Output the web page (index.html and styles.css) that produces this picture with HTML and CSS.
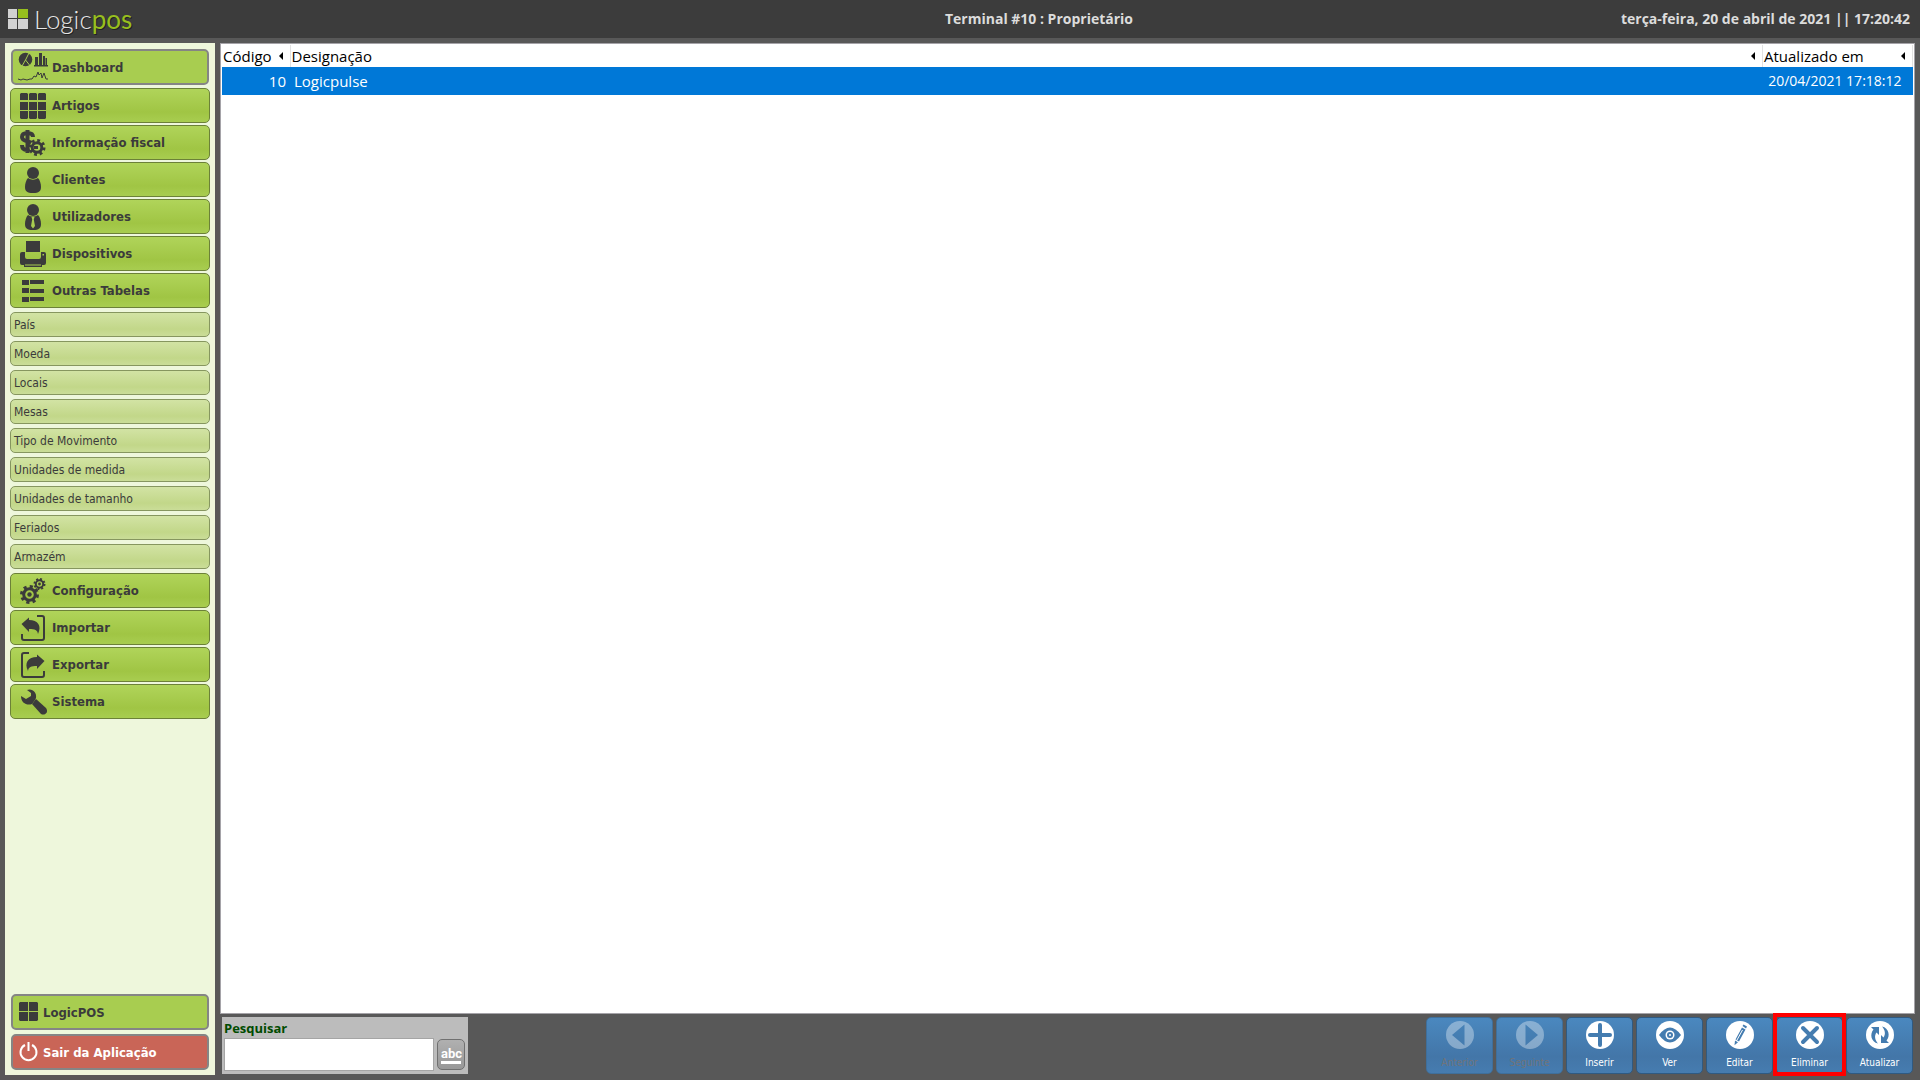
FILE: index.html
```html
<!DOCTYPE html>
<html lang="pt">
<head>
  <meta charset="UTF-8">
  <title>LogicPOS - BackOffice</title>
  <link rel="stylesheet" href="styles.css">
</head>
<body>
  <header class="topbar">
    <div class="logo">
      <svg class="logo-mark" viewBox="0 0 20 20">
        <path fill="#d2d2d2" d="M0 0h9v9H0zM0 10h9v10H0zM10 10h10v10H10z"/>
        <path fill="#97bf1e" d="M10 0h10v9H10z"/>
      </svg>
      <span class="logo-text">Logic<b>pos</b></span>
    </div>
    <h1 class="terminal">Terminal #10 : Proprietário</h1>
    <div class="clock">terça-feira, 20 de abril de 2021 || 17:20:42</div>
  </header>

  <div class="workspace">
    <nav class="sidebar">
      <button class="menu-btn framed dashboard">
        <svg class="icon-large" viewBox="0 0 30 30">
          <circle cx="7.5" cy="7.500" r="6.800"/>
          <path class="cut" d="M7.500 8L11 1M7.500 8L4 14M7.500 8l4 5"/>
          <path d="M16 13h14v1.500H16zM17 5h3v8h-3zM21 1h3v12h-3zM25 4h2v9h-2zM27.500 6H29v7h-1.500z"/>
          <path class="line" d="M0 27l3 1 2-1 4 1 3-1h2l2-3 2 1 2-5 1 3 2-2 1 5 2-5 2 6h2"/>
        </svg>
        <span>Dashboard</span>
      </button>
      <button class="menu-btn">
        <svg class="icon" viewBox="0 0 26 26">
          <path d="M1 0h6l1 1v6H0V1zM10 0h6l1 1v6H9V1zM19 0h6l1 1v6h-8V1zM0 9h8v8H0zM9 9h8v8H9zM18 9h8v8h-8zM0 18h8v7l-1 1H1l-1-1zM9 18h8v7l-1 1h-6l-1-1zM18 18h8v7l-1 1h-6l-1-1z"/>
          <path class="cut" d="M8.500 0v26M17.500 0v26M0 8.500h26M0 17.500h26"/>
        </svg>
        <span>Artigos</span>
      </button>
      <button class="menu-btn">
        <svg class="icon" viewBox="0 0 26 26">
          <path class="dollar" d="M13 7c0-3-2-4-5.500-4S2 4.500 2 7c0 6 11 3 11 8.500 0 3-2.500 4.500-6 4.500S2 18 2 15M7.500 0v23"/>
          <circle class="halo" cx="17" cy="17.500" r="5.500"/>
          <circle class="ring" cx="17" cy="17.500" r="4.800"/>
          <circle class="teeth" cx="17" cy="17.500" r="7" stroke-dasharray="2.750"/>
          <path d="M14 16h4v3h-4z"/>
        </svg>
        <span>Informação fiscal</span>
      </button>
      <button class="menu-btn">
        <svg class="icon" viewBox="0 0 26 26">
          <circle cx="13" cy="6" r="6"/>
          <path d="M8 11q5 3.500 10 0c2 2 3 6 3 9 0 4-2 6-8 6s-8-2-8-6c0-3 1-7 3-9z"/>
        </svg>
        <span>Clientes</span>
      </button>
      <button class="menu-btn">
        <svg class="icon" viewBox="0 0 26 26">
          <circle cx="13" cy="6" r="6"/>
          <path d="M8 11q5 3.500 10 0c2 2 3 6 3 9 0 4-2 6-8 6s-8-2-8-6c0-3 1-7 3-9z"/>
          <path class="tie" d="M11.500 13h3l-.7 2.500L15 22l-2 2.500L11 22l1.200-6.500z"/>
        </svg>
        <span>Utilizadores</span>
      </button>
      <button class="menu-btn">
        <svg class="icon" viewBox="0 0 26 26">
          <path d="M6 0h14v11H6zM2 11h3v5q0 2 2 2h12q2 0 2-2v-5h3q2 0 2 2v9q0 2-2 2H2q-2 0-2-2v-9q0-2 2-2z"/>
          <path d="M4 23h18v3H4z"/>
          <path class="tie" d="M5 23.500h16v1H5zM22.500 13h1.500v1.500h-1.500z"/>
        </svg>
        <span>Dispositivos</span>
      </button>
      <button class="menu-btn">
        <svg class="icon" viewBox="0 0 26 26">
          <path d="M2 2h7v5H2zM10 2h14v4H10zM2 10h7v5H2zM10 11h14v4H10zM2 19h7v5H2zM10 19h14v4H10z"/>
        </svg>
        <span>Outras Tabelas</span>
      </button>

      <div class="submenu">
        <button class="sub-btn">País</button>
        <button class="sub-btn">Moeda</button>
        <button class="sub-btn">Locais</button>
        <button class="sub-btn">Mesas</button>
        <button class="sub-btn">Tipo de Movimento</button>
        <button class="sub-btn">Unidades de medida</button>
        <button class="sub-btn">Unidades de tamanho</button>
        <button class="sub-btn">Feriados</button>
        <button class="sub-btn">Armazém</button>
      </div>

      <button class="menu-btn">
        <svg class="icon" viewBox="0 0 26 26">
          <circle class="ring" cx="9.500" cy="16.500" r="5.800"/>
          <circle class="teeth" cx="9.500" cy="16.500" r="8" stroke-dasharray="3.140"/>
          <circle cx="9.500" cy="16.500" r="2.200"/>
          <circle class="ring thin" cx="19.500" cy="6" r="3.700"/>
          <circle class="teeth thin" cx="19.500" cy="6" r="5" stroke-dasharray="1.960"/>
          <circle cx="19.500" cy="6" r="1.400"/>
        </svg>
        <span>Configuração</span>
      </button>
      <button class="menu-btn">
        <svg class="icon" viewBox="0 0 26 26">
          <path class="tray" d="M17 1h5q2 0 2 2v20q0 2-2 2H4q-2 0-2-2v-4"/>
          <path d="M1.500 9L9 2.500V5c9 0 13 6 9 14-.5-4-3-5-9-5v3z"/>
        </svg>
        <span>Importar</span>
      </button>
      <button class="menu-btn">
        <svg class="icon" viewBox="0 0 26 26">
          <path class="tray" d="M9 1H4Q2 1 2 3v20q0 2 2 2h18q2 0 2-2v-4"/>
          <path d="M24.500 9L17 2.500V5C8 5 4 11 8 19c.5-4 3-5 9-5v3z"/>
        </svg>
        <span>Exportar</span>
      </button>
      <button class="menu-btn">
        <svg class="icon" viewBox="0 0 26 26">
          <path d="M7 1c5-2 10 2 9 8l-1 2-3 4c-5 2-11-1-11-8l5 3 5-3V4z"/>
          <path d="M16 10l10 9c3 4-1 8-5 6l-9-10z"/>
        </svg>
        <span>Sistema</span>
      </button>

      <div class="sidebar-end">
        <button class="menu-btn framed">
          <svg class="icon-small" viewBox="0 0 20 20">
            <path d="M1 0h8v9H0V1zM10 0h8l1 1v8h-9zM0 10h9v9H1l-1-1zM10 10h9v8l-1 1h-8z"/>
          </svg>
          <span>LogicPOS</span>
        </button>
        <button class="menu-btn framed exit">
          <svg class="icon-small" viewBox="0 0 20 20">
            <path class="power" d="M6 3a8 8 0 1 0 7 0M9.500 0v9"/>
          </svg>
          <span>Sair da Aplicação</span>
        </button>
      </div>
    </nav>

    <main class="content">
      <div class="grid-frame">
        <table class="grid">
          <thead>
            <tr>
              <th class="col-code"><div class="head">Código<i class="sort"></i></div></th>
              <th><div class="head">Designação<i class="sort"></i></div></th>
              <th class="col-date"><div class="head">Atualizado em<i class="sort"></i></div></th>
            </tr>
          </thead>
          <tbody>
            <tr class="selected">
              <td class="code">10</td>
              <td>Logicpulse</td>
              <td class="date">20/04/2021 17:18:12</td>
            </tr>
          </tbody>
        </table>
      </div>

      <div class="bottombar">
        <form class="search">
          <label for="search">Pesquisar</label>
          <div class="search-row">
            <input type="text" id="search">
            <button type="button" class="keyboard-btn"><span>abc</span></button>
          </div>
        </form>

        <div class="actions">
          <button class="action-btn" disabled>
            <svg viewBox="0 0 28 28"><circle cx="14" cy="14" r="14"/><path class="blue" d="M18.500 3.500v21L6 14z"/></svg>
            <span>Anterior</span>
          </button>
          <button class="action-btn" disabled>
            <svg viewBox="0 0 28 28"><circle cx="14" cy="14" r="14"/><path class="blue" d="M9.500 3.500v21L22 14z"/></svg>
            <span>Seguinte</span>
          </button>
          <button class="action-btn">
            <svg viewBox="0 0 28 28"><circle cx="14" cy="14" r="14"/><path class="stroke" d="M14 4v20M4 14h20"/></svg>
            <span>Inserir</span>
          </button>
          <button class="action-btn">
            <svg viewBox="0 0 28 28">
              <circle cx="14" cy="14" r="14"/>
              <path class="blue" d="M3 14q11-15 22 0-11 15-22 0z"/>
              <circle cx="14" cy="14" r="4.500"/>
              <circle class="blue" cx="14" cy="14" r="3"/>
              <circle cx="14" cy="14" r="1"/>
            </svg>
            <span>Ver</span>
          </button>
          <button class="action-btn">
            <svg viewBox="0 0 28 28">
              <circle cx="14" cy="14" r="14"/>
              <path class="blue" d="M16.500 5l1-1.500 3.500 2-1 2zM16 6.500l3.500 2-6.500 12-3.500-2zM9 19.500l3 1.700-3.500 3z"/>
              <path class="shine" d="M16.500 9l-5.500 10"/>
            </svg>
            <span>Editar</span>
          </button>
          <button class="action-btn marked">
            <svg viewBox="0 0 28 28"><circle cx="14" cy="14" r="14"/><path class="stroke" d="M7 7l14 14M21 7L7 21"/></svg>
            <span>Eliminar</span>
          </button>
          <button class="action-btn">
            <svg viewBox="0 0 28 28">
              <circle cx="14" cy="14" r="14"/>
              <path class="blue" d="M5 6h8v8l-2.500-2.500C8 15 9 19 12 22.500 5 21 3.500 13 7.500 8.500z"/>
              <path class="blue" d="M23 22h-8v-8l2.500 2.500C20 13 19 9 16 5.500 23 7 24.500 15 20.500 19.500z"/>
            </svg>
            <span>Atualizar</span>
          </button>
        </div>
      </div>
    </main>
  </div>
</body>
</html>
```

FILE: styles.css
```css
* {
  box-sizing: border-box;
}
body {
  margin: 0;
  height: 100vh;
  display: flex;
  flex-direction: column;
  background: #585858;
  font-family: "Open Sans", "Noto Sans", sans-serif;
}
button {
  font-family: "DejaVu Sans Condensed", "DejaVu Sans", sans-serif;
  cursor: pointer;
}

/* top bar */
.topbar {
  height: 38px;
  display: grid;
  grid-template-columns: 160px 1fr auto 1fr;
  align-items: center;
  padding: 0 10px 0 8px;
  background: #3c3c3c;
  color: #dcdcdc;
}
.logo {
  display: flex;
  align-items: center;
  gap: 6px;
}
.logo-mark {
  width: 20px;
  height: 20px;
}
.logo-text {
  font-family: Lato, sans-serif;
  font-weight: 300;
  font-size: 26px;
  line-height: 30px;
  color: #e6e6e6;
  text-shadow: 1px 1px 0 #222;
}
.logo-text b {
  font-weight: 400;
  color: #97bf1e;
}
.terminal,
.clock {
  margin: 0;
  font-size: 14px;
  font-weight: 700;
  line-height: 20px;
}
.terminal {
  grid-column: 3;
}
.clock {
  text-align: right;
}

/* side menu */
.workspace {
  flex: 1;
  display: flex;
  gap: 5px;
  padding: 5px;
  min-height: 0;
}
.sidebar {
  width: 210px;
  display: flex;
  flex-direction: column;
  gap: 2px;
  padding: 6px 5px 5px;
  background: #eef7dc;
}
.menu-btn {
  flex: none;
  height: 35px;
  display: flex;
  align-items: center;
  gap: 6px;
  padding: 0 9px;
  border: 1px solid #6c8138;
  border-radius: 5px;
  background: linear-gradient(#b0d45a, #a0c544 70%, #a8cd50);
  color: #3b3b3b;
  font-size: 13px;
  font-weight: 700;
  text-align: left;
}
.framed {
  height: 36px;
  margin: 0 1px;
  padding: 0 6px;
  gap: 4px;
  border: 2px solid #858585;
  background: #a8cd50;
}
.dashboard {
  margin-bottom: 1px;
  padding: 0 5px;
}
.icon {
  width: 26px;
  height: 26px;
  overflow: visible;
}
.icon-large {
  width: 30px;
  height: 30px;
}
.icon-small {
  width: 20px;
  height: 20px;
  overflow: visible;
}
.menu-btn svg {
  flex: none;
  fill: #3b3b3b;
}
.menu-btn .cut,
.menu-btn .line {
  fill: none;
  stroke: #a8cd50;
  stroke-width: 1;
}
.menu-btn .line {
  stroke: #3b3b3b;
}
.menu-btn .dollar {
  fill: none;
  stroke: #3b3b3b;
  stroke-width: 4;
}
.menu-btn .halo {
  fill: #a8cd50;
  stroke: #a8cd50;
  stroke-width: 4;
}
.menu-btn .ring,
.menu-btn .teeth {
  fill: none;
  stroke: #3b3b3b;
  stroke-width: 3;
}
.menu-btn .thin {
  stroke-width: 2;
}
.menu-btn .tie {
  fill: #a8cd50;
}
.menu-btn .tray {
  fill: none;
  stroke: #3b3b3b;
  stroke-width: 2;
}
.menu-btn .power {
  fill: none;
  stroke: #fff;
  stroke-width: 2;
}
.submenu {
  display: flex;
  flex-direction: column;
  gap: 4px;
  margin: 2px 0;
}
.sub-btn {
  height: 25px;
  padding: 0 3px;
  border: 1px solid #86965f;
  border-radius: 5px;
  background: linear-gradient(#d2e3a4, #c2d789 70%, #cadd98);
  color: #3b3b3b;
  font-size: 12px;
  text-align: left;
}
.sidebar-end {
  display: flex;
  flex-direction: column;
  gap: 4px;
  margin-top: auto;
}
.exit {
  background: #c96557;
  color: #fff;
}

/* records grid */
.content {
  flex: 1;
  display: flex;
  flex-direction: column;
  min-width: 0;
}
.grid-frame {
  flex: 1;
  padding: 1px;
  border: 1px solid #a5a3a8;
  background: #fff;
}
.grid {
  width: 100%;
  border-collapse: collapse;
  table-layout: fixed;
  font-size: 15px;
}
.grid th {
  height: 22px;
  padding: 0 7px 0 1px;
  border-right: 1px solid #e2e2e2;
  font-weight: 400;
}
.col-code {
  width: 68px;
}
.col-date {
  width: 150px;
}
.head {
  display: flex;
  align-items: center;
  justify-content: space-between;
  line-height: 20px;
}
.sort {
  border: 4px solid transparent;
  border-left: 0;
  border-right-color: #000;
}
.grid td {
  height: 28px;
  padding: 0 4px;
  line-height: 20px;
  white-space: nowrap;
}
.grid .code {
  text-align: right;
}
.grid .date {
  padding-right: 11px;
  font-size: 14px;
  text-align: right;
}
.selected {
  background: #0078d7;
  color: #fff;
}

/* search and actions */
.bottombar {
  display: flex;
  justify-content: space-between;
  padding: 3px 2px 1px;
}
.search {
  width: 246px;
  padding: 2px 3px 2px 2px;
  background: #bcbcbc;
}
.search label {
  display: block;
  font-size: 13px;
  font-weight: 700;
  line-height: 19px;
  color: #004b00;
}
.search-row {
  display: flex;
  align-items: center;
  gap: 3px;
}
.search input {
  flex: 1;
  min-width: 0;
  height: 33px;
  border: 1px solid #a5a5a5;
  background: #fff;
  font-size: 15px;
}
.keyboard-btn {
  width: 28px;
  height: 31px;
  padding: 0;
  border: 1px solid #707070;
  border-radius: 5px;
  background: linear-gradient(#b0b0b0, #989898);
  color: #fff;
  font-family: Roboto, sans-serif;
  font-size: 13px;
  font-weight: 700;
}
.keyboard-btn span {
  display: block;
  margin: 0 3px;
  border-bottom: 3px solid #fff;
  line-height: 15px;
}
.actions {
  display: flex;
  gap: 3px;
}
.action-btn {
  position: relative;
  width: 67px;
  height: 57px;
  display: flex;
  flex-direction: column;
  align-items: center;
  gap: 7px;
  padding: 3px 0 0;
  border: 1px solid #2f5a82;
  border-radius: 5px;
  background: linear-gradient(#4a88bf, #4376a8 70%, #467cb0);
  color: #fff;
  font-size: 10px;
  line-height: 14px;
}
.action-btn svg {
  width: 28px;
  height: 28px;
  fill: #fff;
}
.action-btn .blue {
  fill: #447cb0;
}
.action-btn .stroke {
  fill: none;
  stroke: #447cb0;
  stroke-width: 4;
  stroke-linecap: round;
}
.action-btn .shine {
  stroke: #fff;
  stroke-width: 1;
}
.action-btn:disabled {
  border-color: #3f6f9b;
  color: #717478;
}
.action-btn:disabled svg {
  opacity: 0.35;
}
.marked::after {
  content: "";
  position: absolute;
  inset: -5px -4px -3px;
  border: 4px solid #f00;
}
```
